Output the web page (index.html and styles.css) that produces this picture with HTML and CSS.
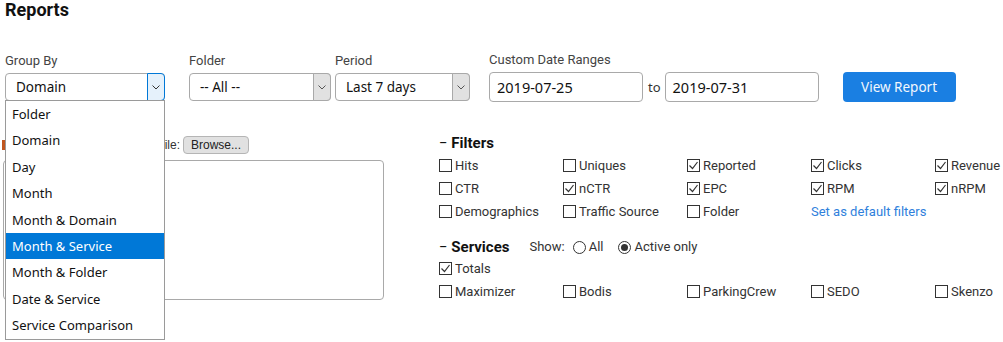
FILE: index.html
```html
<!DOCTYPE html>
<html lang="en">
<head>
    <meta charset="UTF-8">
    <meta name="viewport" content="width=device-width, initial-scale=1.0">
    <title>Reports</title>
    <link rel="stylesheet" href="styles.css">
</head>
<body>
    <h1>Reports</h1>

    <div class="controls">
        <div class="field group-by">
            <span class="label">Group By</span>
            <div class="select focused">
                <span class="select-value">Domain</span>
                <span class="select-arrow"><svg width="8" height="5" viewBox="0 0 8 5"><polyline points="0.5,0.5 4,4 7.5,0.5" fill="none" stroke="#333" stroke-width="1"/></svg></span>
                <ul class="options">
                    <li>Folder</li>
                    <li>Domain</li>
                    <li>Day</li>
                    <li>Month</li>
                    <li>Month &amp; Domain</li>
                    <li class="hover">Month &amp; Service</li>
                    <li>Month &amp; Folder</li>
                    <li>Date &amp; Service</li>
                    <li>Service Comparison</li>
                </ul>
            </div>
        </div>
        <div class="field folder">
            <span class="label">Folder</span>
            <div class="select">
                <span class="select-value">-- All --</span>
                <span class="select-arrow"><svg width="8" height="5" viewBox="0 0 8 5"><polyline points="0.5,0.5 4,4 7.5,0.5" fill="none" stroke="#555" stroke-width="1"/></svg></span>
            </div>
        </div>
        <div class="field period">
            <span class="label">Period</span>
            <div class="select">
                <span class="select-value">Last 7 days</span>
                <span class="select-arrow"><svg width="8" height="5" viewBox="0 0 8 5"><polyline points="0.5,0.5 4,4 7.5,0.5" fill="none" stroke="#555" stroke-width="1"/></svg></span>
            </div>
        </div>
        <div class="field dates">
            <span class="label">Custom Date Ranges</span>
            <div class="date-range">
                <span class="date-input">2019-07-25</span>
                <span class="to">to</span>
                <span class="date-input">2019-07-31</span>
            </div>
        </div>
        <button class="view-report">View Report</button>
    </div>

    <div class="lower">
        <div class="import">
            <div class="upload">
                <span class="upload-icon"></span>
                <span class="upload-text">Import list from file:</span>
                <span class="browse">Browse...</span>
            </div>
            <div class="textarea"></div>
        </div>

        <div class="options-panel">
            <div class="section-title"><span class="dash">&minus;</span> Filters</div>
            <div class="checks">
                <span class="check"><span class="box"></span>Hits</span>
                <span class="check"><span class="box"></span>Uniques</span>
                <span class="check"><span class="box on"><svg width="11" height="11" viewBox="0 0 11 11"><polyline points="1.5,5.5 4.5,8.5 9.5,2" fill="none" stroke="#333" stroke-width="1.2"/></svg></span>Reported</span>
                <span class="check"><span class="box on"><svg width="11" height="11" viewBox="0 0 11 11"><polyline points="1.5,5.5 4.5,8.5 9.5,2" fill="none" stroke="#333" stroke-width="1.2"/></svg></span>Clicks</span>
                <span class="check"><span class="box on"><svg width="11" height="11" viewBox="0 0 11 11"><polyline points="1.5,5.5 4.5,8.5 9.5,2" fill="none" stroke="#333" stroke-width="1.2"/></svg></span>Revenue</span>

                <span class="check"><span class="box"></span>CTR</span>
                <span class="check"><span class="box on"><svg width="11" height="11" viewBox="0 0 11 11"><polyline points="1.5,5.5 4.5,8.5 9.5,2" fill="none" stroke="#333" stroke-width="1.2"/></svg></span>nCTR</span>
                <span class="check"><span class="box on"><svg width="11" height="11" viewBox="0 0 11 11"><polyline points="1.5,5.5 4.5,8.5 9.5,2" fill="none" stroke="#333" stroke-width="1.2"/></svg></span>EPC</span>
                <span class="check"><span class="box on"><svg width="11" height="11" viewBox="0 0 11 11"><polyline points="1.5,5.5 4.5,8.5 9.5,2" fill="none" stroke="#333" stroke-width="1.2"/></svg></span>RPM</span>
                <span class="check"><span class="box on"><svg width="11" height="11" viewBox="0 0 11 11"><polyline points="1.5,5.5 4.5,8.5 9.5,2" fill="none" stroke="#333" stroke-width="1.2"/></svg></span>nRPM</span>

                <span class="check"><span class="box"></span>Demographics</span>
                <span class="check"><span class="box"></span>Traffic Source</span>
                <span class="check"><span class="box"></span>Folder</span>
                <a class="check link" href="#">Set as default filters</a>
            </div>

            <div class="section-title services-title">
                <span><span class="dash">&minus;</span> Services</span>
                <span class="show">Show:
                    <span class="radio"></span>All
                    <span class="radio on"></span>Active only
                </span>
            </div>
            <div class="checks">
                <span class="check"><span class="box on"><svg width="11" height="11" viewBox="0 0 11 11"><polyline points="1.5,5.5 4.5,8.5 9.5,2" fill="none" stroke="#333" stroke-width="1.2"/></svg></span>Totals</span>
            </div>
            <div class="checks">
                <span class="check"><span class="box"></span>Maximizer</span>
                <span class="check"><span class="box"></span>Bodis</span>
                <span class="check"><span class="box"></span>ParkingCrew</span>
                <span class="check"><span class="box"></span>SEDO</span>
                <span class="check"><span class="box"></span>Skenzo</span>
            </div>
        </div>
    </div>
</body>
</html>
```

FILE: styles.css
```css
html, body {
    min-height: 342px;
}
body {
    margin: 0;
    padding: 0 5px;
    font-family: Roboto, sans-serif;
    font-size: 13px;
    color: #333;
    background-color: #fff;
    overflow: hidden;
}
h1 {
    margin: 0;
    font-size: 18px;
    line-height: 20px;
    font-weight: bold;
    color: #111;
}
.controls {
    display: flex;
    align-items: flex-end;
    margin-top: 32px;
}
.field {
    display: flex;
    flex-direction: column;
}
.label {
    line-height: 15px;
    margin-bottom: 5px;
    color: #444;
}
.group-by {
    width: 160px;
    margin-right: 24px;
}
.folder {
    width: 142px;
    margin-right: 4px;
}
.period {
    width: 135px;
    margin-right: 19px;
}
.dates {
    margin-right: 24px;
}
.select {
    position: relative;
    display: flex;
    height: 28px;
    box-sizing: border-box;
    border: 1px solid #a9a9a9;
    border-radius: 4px;
    font-family: "Noto Sans", sans-serif;
    font-size: 13.5px;
    color: #111;
    margin-bottom: 1px;
}
.select-value {
    flex: 1;
    padding-left: 10px;
    line-height: 26px;
}
.select-arrow {
    display: flex;
    align-items: center;
    justify-content: center;
    width: 16px;
    margin: -1px -1px -1px 0;
    border: 1px solid #a9a9a9;
    border-radius: 0 4px 4px 0;
    background-color: #e1e1e1;
}
.focused .select-arrow {
    border-color: #0078d7;
    background-color: #e5f1fb;
}
.options {
    position: absolute;
    top: 100%;
    left: -1px;
    width: 160px;
    box-sizing: border-box;
    margin: 0;
    padding: 0;
    list-style: none;
    border: 1px solid #9a9a9a;
    background-color: #fff;
    font-size: 13px;
    z-index: 5;
}
.options li {
    height: 26.4px;
    line-height: 26.4px;
    padding-left: 6px;
    white-space: nowrap;
}
.options li.hover {
    background-color: #0078d7;
    color: #fff;
}
.date-range {
    display: flex;
    align-items: center;
}
.date-input {
    width: 154px;
    height: 30px;
    box-sizing: border-box;
    border: 1px solid #a9a9a9;
    border-radius: 4px;
    padding-left: 7px;
    line-height: 28px;
    font-family: "Noto Sans", sans-serif;
    font-size: 14.5px;
    color: #111;
}
.to {
    margin: 0 4px 0 5px;
    font-family: "Noto Sans", sans-serif;
    font-size: 13px;
}
.view-report {
    width: 113px;
    height: 30px;
    border: none;
    border-radius: 4px;
    background-color: #1a7fe2;
    color: #f2f7fd;
    font-family: "Noto Sans", sans-serif;
    font-size: 13.5px;
    padding: 0;
}
.lower {
    display: grid;
    grid-template-columns: 380px auto;
    column-gap: 54px;
    margin-top: 31px;
}
.upload {
    display: flex;
    align-items: center;
    height: 18px;
    margin-top: 3px;
    font-family: "Liberation Sans", Arial, sans-serif;
    font-size: 12px;
    color: #333;
}
.upload-icon {
    width: 10px;
    height: 10px;
    margin-left: -3px;
    background-color: #c0561e;
}
.upload-text {
    width: 168px;
    text-align: right;
    white-space: nowrap;
    overflow: hidden;
}
.browse {
    margin-left: 3px;
    height: 18px;
    box-sizing: border-box;
    padding: 0 7px;
    line-height: 16px;
    border: 1px solid #b5b5b5;
    border-radius: 4px;
    background-color: #e1e1e1;
    color: #222;
}
.textarea {
    width: 381px;
    height: 140px;
    box-sizing: border-box;
    margin: 6px 0 0 -2px;
    border: 1px solid #a9a9a9;
    border-radius: 4px;
}
.section-title {
    font-size: 15px;
    font-weight: bold;
    line-height: 20px;
    margin-bottom: 1px;
    color: #111;
}
.dash {
    font-weight: normal;
}
.services-title {
    display: flex;
    align-items: center;
    margin-top: 14px;
    margin-bottom: 0;
}
.show {
    display: flex;
    align-items: center;
    margin-left: 20px;
    font-size: 13px;
    font-weight: normal;
    color: #333;
}
.radio {
    width: 13px;
    height: 13px;
    box-sizing: border-box;
    border: 1px solid #333;
    border-radius: 50%;
    margin: 0 3px 0 8px;
    display: flex;
    align-items: center;
    justify-content: center;
}
.radio.on::after {
    content: "";
    width: 7px;
    height: 7px;
    border-radius: 50%;
    background-color: #333;
}
.radio.on {
    margin-left: 15px;
}
.checks {
    display: grid;
    grid-template-columns: repeat(4, 124px) auto;
}
.check {
    display: flex;
    align-items: center;
    height: 23px;
    white-space: nowrap;
}
.box {
    width: 13px;
    height: 13px;
    box-sizing: border-box;
    border: 1px solid #333;
    margin-right: 3px;
    display: flex;
    align-items: center;
    justify-content: center;
}
.link {
    color: #2f7fdc;
    text-decoration: none;
}
```
